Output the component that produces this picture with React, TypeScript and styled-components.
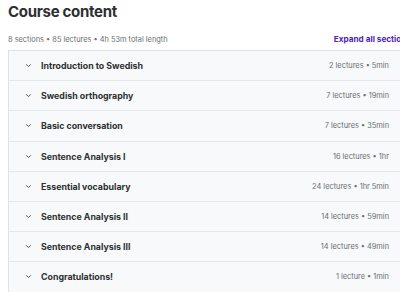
import React from 'react';
import styled, { createGlobalStyle } from 'styled-components';

const GlobalStyle = createGlobalStyle`
  html, body {
    margin: 0;
    padding: 0;
    background: #ffffff;
    overflow: hidden;
  }
  body {
    font-family: 'Inter', 'Roboto', sans-serif;
    color: #2d2f31;
  }
`;

const Page = styled.div`
  width: 400px;
  padding: 0 0 0 8px;
`;

const Title = styled.h2`
  margin: 0;
  padding-top: 3px;
  font-size: 15px;
  font-weight: 700;
  letter-spacing: -0.3px;
  line-height: 18px;
  color: #2d2f31;
`;

const SummaryBar = styled.div`
  display: flex;
  align-items: center;
  justify-content: space-between;
  margin-top: 12px;
  height: 12px;
  margin-bottom: 5px;
`;

const Summary = styled.span`
  font-size: 7.4px;
  color: #6a6f73;
`;

const ExpandLink = styled.button`
  border: none;
  background: none;
  padding: 0;
  margin-right: -3px;
  font-family: inherit;
  font-size: 8.2px;
  font-weight: 700;
  color: #5022c3;
  cursor: pointer;
  white-space: nowrap;
`;

const Panel = styled.div`
  border: 1px solid #dde2e5;
  border-bottom: none;
`;

const Row = styled.div`
  display: flex;
  align-items: center;
  height: 29.2px;
  padding: 0 18px 0 16px;
  background: #f7f9fa;
  border-bottom: 1px solid #e4e8eb;
`;

const Chevron = styled.span`
  display: flex;
  width: 8px;
  margin-right: 8px;
`;

const SectionTitle = styled.span`
  flex: 1;
  font-size: 8.8px;
  font-weight: 700;
  color: #2d2f31;
`;

const Meta = styled.span`
  font-size: 7.4px;
  color: #6a6f73;
`;

const sections = [
  ['Introduction to Swedish', '2 lectures • 5min'],
  ['Swedish orthography', '7 lectures • 19min'],
  ['Basic conversation', '7 lectures • 35min'],
  ['Sentence Analysis I', '16 lectures • 1hr'],
  ['Essential vocabulary', '24 lectures • 1hr 5min'],
  ['Sentence Analysis II', '14 lectures • 59min'],
  ['Sentence Analysis III', '14 lectures • 49min'],
  ['Congratulations!', '1 lecture • 1min'],
];

const ChevronIcon = () => (
  <svg width="7" height="5" viewBox="0 0 7 5">
    <path d="M1.2 1.4 L3.5 3.5 L5.8 1.4" fill="none" stroke="#3e4143" strokeWidth="0.9" />
  </svg>
);

export default function App() {
  return (
    <Page>
      <GlobalStyle />
      <Title>Course content</Title>
      <SummaryBar>
        <Summary>8 sections • 85 lectures • 4h 53m total length</Summary>
        <ExpandLink>Expand all sections</ExpandLink>
      </SummaryBar>
      <Panel>
        {sections.map(([title, meta]) => (
          <Row key={title}>
            <Chevron>
              <ChevronIcon />
            </Chevron>
            <SectionTitle>{title}</SectionTitle>
            <Meta>{meta}</Meta>
          </Row>
        ))}
      </Panel>
    </Page>
  );
}
